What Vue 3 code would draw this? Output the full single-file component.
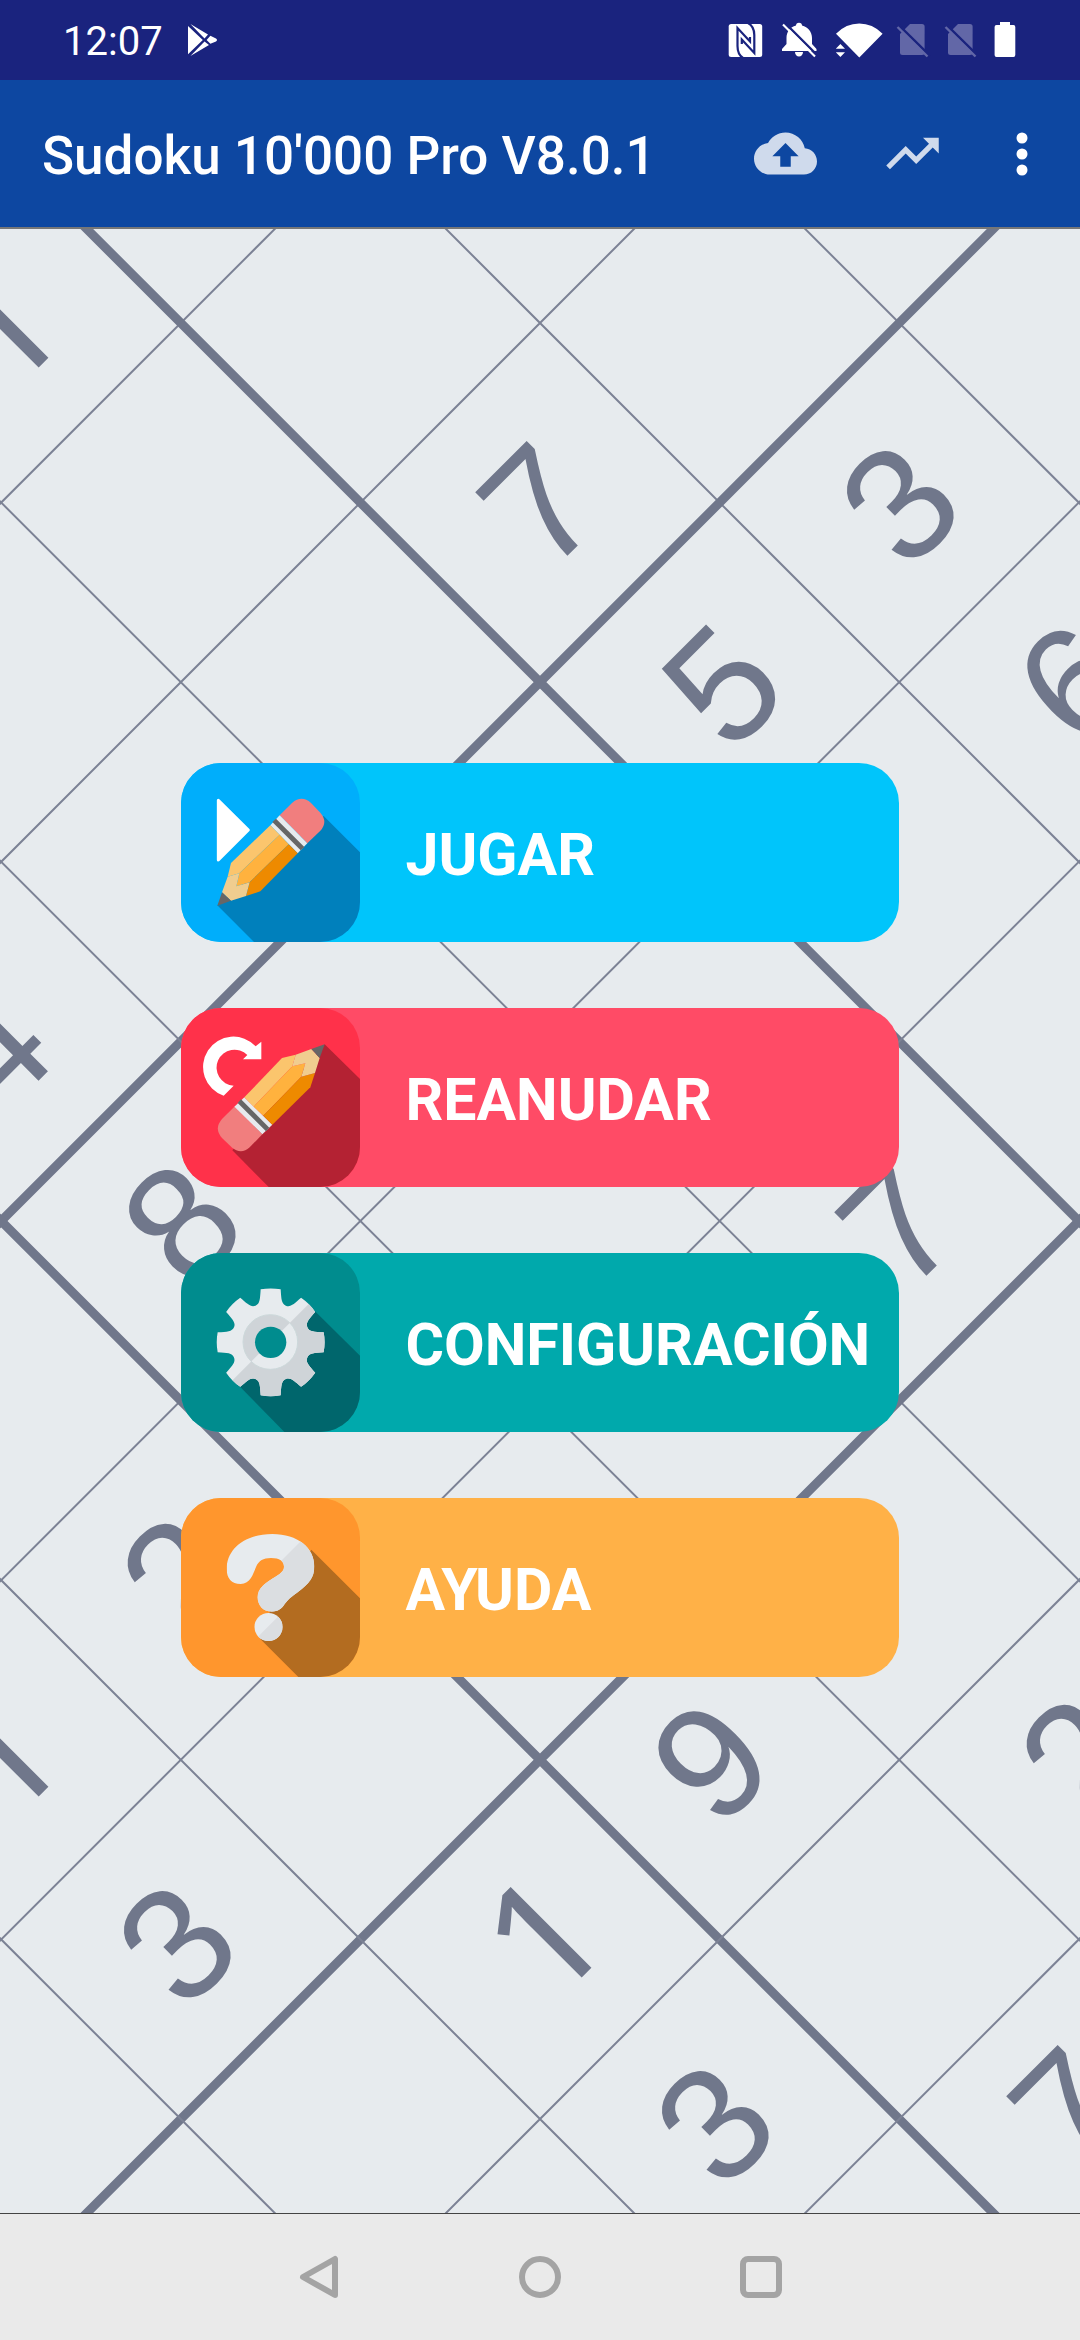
<script setup>

import { ref } from 'vue';

const title = ref("Sudoku 10'000 Pro V8.0.1");

const menu = [
    { id: 'play', label: 'JUGAR' },
    { id: 'resume', label: 'REANUDAR' },
    { id: 'settings', label: 'CONFIGURACIÓN' },
    { id: 'help', label: 'AYUDA' },
];

// Board geometry: CELL is the side of one square, the board is turned by 45 degrees
const CELL = 254;
const lines = [];
for (let i = -5; i <= 4; i++) {
    lines.push({ pos: (i + 0.5) * CELL, thick: i === -5 || i === -2 || i === 1 || i === 4 });
}

// Places are measured from the middle of the board
const digits = [
    { n: 1, x: -539, y: -895 },
    { n: 7, x: -1, y: -716 },
    { n: 3, x: 359, y: -718 },
    { n: 5, x: 182, y: -536 },
    { n: 6, x: 535, y: -538 },
    { n: 4, x: -549, y: -172 },
    { n: 8, x: -359, y: 1 },
    { n: 7, x: 358, y: 4 },
    { n: 2, x: -361, y: 355 },
    { n: 1, x: -539, y: 534 },
    { n: 9, x: 170, y: 540 },
    { n: 2, x: 538, y: 536 },
    { n: 3, x: -364, y: 722 },
    { n: 1, x: 4, y: 715 },
    { n: 3, x: 174, y: 902 },
    { n: 7, x: 530, y: 888 },
];

function turn(x, y, step) {
    const a = step * Math.PI / 4;
    const rx = x * Math.cos(a) - y * Math.sin(a);
    const ry = x * Math.sin(a) + y * Math.cos(a);
    return rx.toFixed(1) + ' ' + ry.toFixed(1);
}

function gear() {
    let d = 'M' + turn(-30, -159, 0);
    for (let i = 0; i < 8; i++) { // Per tooth
        d += 'A162 162 0 0 1 ' + turn(30, -159, i);
        d += 'C' + [turn(32, -130, i), turn(32, -116, i), turn(45.5, -110, i)].join(' ');
        d += 'C' + [turn(59, -104, i), turn(69.4, -114.7, i), turn(91.2, -133.6, i)].join(' ');
    }
    return d + 'Z';
}

const gearPath = gear();

</script>

<template>
    <div class="screen">
        <header class="status">
            <span class="clock">12:07</span>
            <svg class="store" width="32" height="40" viewBox="186 20 32 40">
                <path fill="#fff" d="M187 26L201.800 40 187 54.300zM189.400 24L207 34.500 203.500 38.500zM209.400 35.700L215 38.500Q217 40 215 41.500L209.400 43.700 205.600 40zM203.500 41.500L208 45 189.400 56z" />
            </svg>
            <div class="status-icons">
                <svg width="44" height="40" viewBox="724 20 44 40">
                    <rect x="728.700" y="24" width="33.500" height="33" rx="2.500" fill="#fff" />
                    <path fill="none" stroke="#1a237e" stroke-width="2.200" d="M743 58C738.500 55 737.500 51 737.500 46V28L750 41.500V37M748 23C753.500 26 754.300 30 754.300 35V53L741.800 39.500V44" />
                </svg>
                <svg width="48" height="40" viewBox="776 20 48 40">
                    <path fill="#fff" d="M799 22.700C797 22.700 796 24 796 25.500 790 27 786.500 32 786.500 38V44L782 49V51H816.500V49L812 44V38C812 32 808 27 802 25.500 802 24 801 22.700 799 22.700zM795 52H803A4 4.500 0 0 1 795 52z" />
                    <path stroke="#1a237e" stroke-width="2.400" d="M784.500 22.500L818 56" />
                    <path stroke="#fff" stroke-width="2.200" d="M783 24.500L815 56.500" />
                </svg>
                <svg width="54" height="40" viewBox="832 20 54 40">
                    <path fill="#fff" d="M859.300 57.500L836 33.700Q846 23.500 859.300 23.500 872.500 23.500 882.600 33.700zM840.400 44L845 48.700H835.800zM835.800 52.300H845L840.400 57z" />
                </svg>
                <svg v-for="n in 2" :key="n" width="40" height="40" viewBox="894 20 40 40">
                    <path fill="#6267a7" d="M910 24H922Q924.600 24 924.600 26.500V52.500Q924.600 55 922 55H902.500Q900 55 900 52.500V34z" />
                    <path stroke="#1a237e" stroke-width="2.600" d="M899 25.500L930 56" />
                    <path stroke="#6267a7" stroke-width="2.400" d="M897.500 27L927.500 56.500" />
                </svg>
                <svg width="30" height="40" viewBox="990 20 30 40">
                    <path fill="#fff" d="M1000 22H1010V25H1013.500Q1015.300 25 1015.300 27V55Q1015.300 57 1013.500 57H996.500Q994.600 57 994.600 55V27Q994.600 25 996.500 25H1000z" />
                </svg>
            </div>
        </header>

        <div class="toolbar">
            <h1>{{ title }}</h1>
            <button type="button" aria-label="Subir a la nube">
                <svg width="63" height="63" viewBox="0 0 24 24">
                    <path fill="#cfdaec" d="M19.350 10.040C18.670 6.590 15.640 4 12 4 9.110 4 6.600 5.640 5.350 8.040 2.340 8.360 0 10.910 0 14c0 3.310 2.690 6 6 6h13c2.760 0 5-2.240 5-5 0-2.640-2.050-4.780-4.650-4.960zM14 13v4h-4v-4H7l5-5 5 5h-3z" />
                </svg>
            </button>
            <button type="button" aria-label="Estadísticas">
                <svg width="63" height="63" viewBox="0 0 24 24">
                    <path fill="#cfdaec" d="M16 6l2.290 2.290-4.880 4.880-4-4L2 16.590 3.410 18l6-6 4 4 6.300-6.290L22 12V6z" />
                </svg>
            </button>
            <button type="button" aria-label="Más opciones">
                <svg width="28" height="63" viewBox="0 0 28 63">
                    <g fill="#fff">
                        <circle cx="14" cy="16" r="5.500" />
                        <circle cx="14" cy="32" r="5.500" />
                        <circle cx="14" cy="48" r="5.500" />
                    </g>
                </svg>
            </button>
        </div>

        <main class="stage">
            <svg class="board" viewBox="-540 -992 1080 1984" preserveAspectRatio="xMidYMid slice" aria-hidden="true">
                <g transform="rotate(45)">
                    <template v-for="line in lines" :key="line.pos">
                        <path :class="line.thick ? 'thick' : 'thin'" :d="`M${line.pos} -1600V1600M-1600 ${line.pos}H1600`" />
                    </template>
                </g>
                <text v-for="(d, index) in digits" :key="index" y="56" :class="{ one: d.n === 1 }"
                    :transform="`translate(${d.x} ${d.y}) rotate(-45)`">{{ d.n }}</text>
            </svg>

            <nav class="menu">
                <button v-for="item in menu" :key="item.id" type="button" :class="item.id">
                    <svg class="icon" viewBox="34 40 537 537">
                        <g v-if="item.id === 'play'">
                            <path fill="#0080bc" d="M143 467L260 584H580V317L462 199z" />
                            <path fill="#fff" stroke="#fff" stroke-width="9" stroke-linejoin="round" d="M146 152V331L236 241z" />
                            <g id="pencil">
                                <path fill="#f17e7e" d="M330 197L367 160Q396 135 424 160L452 189Q476 217 452 243L413 281z" />
                                <path fill="#e7ebee" d="M330 197L413 281 384 311 302 227z" />
                                <path fill="#666" d="M319 207L404 292 393 302 308 217z" />
                                <path fill="#fbc56d" d="M302 227L330 255 209 371 174 381 184 340z" />
                                <path fill="#ffb23e" d="M330 255L357 284 240 398 200 410 209 371z" />
                                <path fill="#ee8a00" d="M357 284L384 311 272 425 229 439 240 398z" />
                                <path fill="#f0cd8f" d="M174 381L209 371 200 410 240 398 229 439 184 453 157 428z" />
                                <path fill="#666" d="M157 428L184 453 143 468z" />
                            </g>
                        </g>
                        <g v-else-if="item.id === 'resume'">
                            <path fill="#b42233" d="M465 149L580 262V584H304L188 467z" />
                            <path fill="#fff" d="M162 303A91 91 0 1 1 258 155L275 141V194H220L233 181A54 54 0 1 0 192 273z" />
                            <use href="#pencil" transform="matrix(0 1 1 0 -3 6)" />
                        </g>
                        <g v-else-if="item.id === 'settings'">
                            <clipPath id="lower">
                                <path d="M10 600L600 10V600z" />
                            </clipPath>
                            <path fill="#00666c" d="M436 215L580 357V584H351L209 439 303 308z" />
                            <path fill="#e7ebee" transform="translate(303 308)" :d="gearPath" />
                            <g clip-path="url(#lower)">
                                <path fill="#cfd4d8" transform="translate(303 308)" :d="gearPath" />
                            </g>
                            <circle cx="302" cy="307" r="82" fill="#cfd4d8" />
                            <circle cx="302" cy="307" r="82" fill="#e7ebee" clip-path="url(#lower)" />
                            <circle cx="302" cy="307" r="82" fill="none" stroke="#ccd8da" stroke-width="3" />
                            <circle cx="303" cy="308" r="47" fill="#008c8e" />
                        </g>
                        <g v-else>
                            <clipPath id="mark">
                                <path d="M213 298C185 298 171 280 171 253 171 195 222 148 308 148 385 148 434 190 434 245 434 280 418 297 385 322 365 336 355 345 345 358 336 372 325 381 306 381 280 381 264 362 264 338 264 312 285 297 310 281 332 267 343 260 343 246 343 230 330 220 304 220 280 220 268 228 260 245 250 268 243 298 213 298z" />
                            </clipPath>
                            <clipPath id="dot">
                                <circle cx="296.500" cy="427" r="42" />
                            </clipPath>
                            <path fill="#b36c20" d="M425 195L580 350V584H393L272 463 300 385V375z" />
                            <g clip-path="url(#mark)">
                                <path fill="#e7ebee" d="M150 130H450V400H150z" />
                                <path fill="#dbdee1" d="M163 400L433 130H450V400z" />
                            </g>
                            <g clip-path="url(#dot)">
                                <path fill="#e7ebee" d="M250 380H340V470H250z" />
                                <path fill="#dbdee1" d="M251 470L341 380V470z" />
                            </g>
                        </g>
                    </svg>
                    <span>{{ item.label }}</span>
                </button>
            </nav>
        </main>

        <footer class="navbar">
            <button type="button" aria-label="Atrás">
                <svg width="42" height="44" viewBox="0 0 42 44">
                    <path d="M5 22L37 4V40z" />
                </svg>
            </button>
            <button type="button" aria-label="Inicio">
                <svg width="42" height="44" viewBox="0 0 42 44">
                    <circle cx="21" cy="22" r="18" />
                </svg>
            </button>
            <button type="button" aria-label="Recientes">
                <svg width="42" height="44" viewBox="0 0 42 44">
                    <rect x="3" y="4" width="36" height="36" rx="5" />
                </svg>
            </button>
        </footer>
    </div>
</template>

<style>
body {
    margin: 0;
}
</style>

<style scoped>
.screen {
    display: flex;
    flex-direction: column;
    min-height: 100vh;
    font-family: Roboto, "Liberation Sans", sans-serif;
    color: #fff;
}

svg {
    display: block;
    flex: none;
}

button {
    border: 0;
    padding: 0;
    background: none;
    color: inherit;
    font-family: inherit;
}

.status {
    display: flex;
    align-items: center;
    height: 80px;
    padding: 0 60px 0 63px;
    background: #1a237e;
}

.clock {
    padding-top: 4px;
    font-size: 40px;
    line-height: 48px;
}

.store {
    margin-left: 24px;
}

.status-icons {
    display: flex;
    gap: 8px;
    margin-left: auto;
}

.toolbar {
    display: flex;
    align-items: center;
    gap: 64px;
    height: 147px;
    padding: 0 44px 0 42px;
    background: #0d47a1;
}

h1 {
    flex: 1;
    margin: 0;
    padding-top: 4px;
    font-size: 53px;
    line-height: 64px;
    font-weight: 500;
    white-space: nowrap;
}

.stage {
    position: relative;
    flex: 1;
    display: flex;
    align-items: center;
    justify-content: center;
    padding: 40px 0 42px;
    border-top: 2px solid #777;
    background: #e7ebee;
}

.board {
    position: absolute;
    inset: 0;
    width: 100%;
    height: 100%;
}

.thick {
    stroke: #70778b;
    stroke-width: 9;
}

.thin {
    stroke: #7c8295;
    stroke-width: 2;
}

.board text {
    fill: #70778b;
    font-family: "Liberation Sans", Arial, sans-serif;
    font-size: 160px;
    text-anchor: middle;
}

.board .one {
    font-family: "Noto Sans", "Open Sans", sans-serif;
}

.menu {
    position: relative;
    display: flex;
    flex-direction: column;
    gap: 66px;
    width: 66.4%;
}

.menu button {
    display: flex;
    align-items: center;
    gap: 45px;
    border-radius: 40px;
    font-size: 59px;
    line-height: 72px;
    font-weight: 700;
    text-align: left;
    white-space: nowrap;
}

.menu span {
    padding-top: 4px;
}

.icon {
    width: 179px;
    height: 179px;
    border-radius: 40px;
    overflow: hidden;
}

.play {
    background: #00c5fb;
}

.play .icon {
    background: #00aefb;
}

.resume {
    background: #ff4b66;
}

.resume .icon {
    background: #ff314a;
}

.settings {
    background: #00a9ac;
}

.settings .icon {
    background: #008c8e;
}

.help {
    background: #ffb147;
}

.help .icon {
    background: #ff962d;
}

.navbar {
    display: flex;
    align-items: center;
    justify-content: center;
    gap: 179px;
    height: 126px;
    border-top: 1px solid #444;
    background: #eaeaea;
}

.navbar svg {
    fill: none;
    stroke: #a4a4a4;
    stroke-width: 6;
    stroke-linejoin: round;
}
</style>
